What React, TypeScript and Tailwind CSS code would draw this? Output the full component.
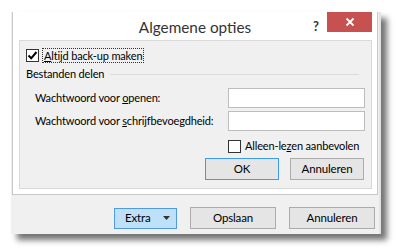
import React from "react";

const font = { fontFamily: 'Lato, "Noto Sans", sans-serif' };

function Check({ checked }: { checked?: boolean }) {
  return (
    <span className="w-[13px] h-[13px] border border-[#333] bg-white flex items-center justify-center shrink-0">
      {checked && (
        <svg width="11" height="11" viewBox="0 0 11 11">
          <path d="M1.5 5.5 L4.2 8.3 L9.5 2" stroke="#000" strokeWidth="2" fill="none" />
        </svg>
      )}
    </span>
  );
}

export default function App() {
  return (
    <div className="relative w-[396px] h-[250px] bg-white overflow-hidden text-[11px] tracking-[-0.15px] text-[#000] whitespace-nowrap" style={font}>
      {/* back window */}
      <div className="absolute left-[11px] top-[12px] w-[370px] h-[222px] bg-[#f0f0f0] border-r-2 border-[#e3e3e3] shadow-[6px_6px_6px_rgba(0,0,0,0.55)] flex flex-col justify-end">
        <div className="flex justify-end items-center gap-[13px] pr-[4px] pb-[5px] text-[11.5px]">
          <div className="w-[63px] h-[21px] bg-[#bee0f8] border border-[#4f9ae0] flex items-center justify-between pl-[10px] pr-[5px]">
            <span>Extra</span>
            <svg width="8" height="5" viewBox="0 0 8 5" className="shrink-0">
              <path d="M0 0 H7 L3.5 4 Z" fill="#333" />
            </svg>
          </div>
          <div className="w-[86px] h-[22px] bg-[#e5e5e5] border border-[#acacac] flex items-center justify-center">Opslaan</div>
          <div className="w-[86px] h-[22px] bg-[#e5e5e5] border border-[#acacac] flex items-center justify-center">Annuleren</div>
        </div>
      </div>

      {/* front dialog */}
      <div className="absolute left-[12px] top-[12px] w-[366px] h-[183px] bg-white border border-[#c8c8c8] border-t-0 flex flex-col">
        <div className="h-[28px] relative flex items-center justify-center shrink-0">
          <span className="text-[15.3px] tracking-normal text-[#333] mt-[2px]">Algemene opties</span>
          <span className="absolute left-[300px] top-[5px] text-[13px] font-bold text-[#333]">?</span>
          <div className="absolute right-[5px] top-0 w-[45px] h-[20px] bg-[#c75050] flex items-center justify-center">
            <svg width="10" height="10" viewBox="0 0 10 10">
              <path d="M1.5 1.5 L8.5 8.5 M8.5 1.5 L1.5 8.5" stroke="#fff" strokeWidth="1.8" />
            </svg>
          </div>
        </div>
        <div className="ml-[6px] mr-[5px] h-[149px] bg-[#f0f0f0] border border-[#d9d9d9] flex flex-col px-[6px] pt-[7px]">
          <div className="flex items-center gap-[3px] h-[15px]">
            <Check checked />
            <span className="border border-dotted border-[#333] px-[1px] leading-[13px]">
              <span className="underline">A</span>ltijd back-up maken
            </span>
          </div>
          <div className="flex items-center gap-[6px] mt-[4px] h-[14px]">
            <span>Bestanden delen</span>
            <div className="flex-1 h-px bg-[#dcdcdc] mr-[6px]" />
          </div>
          <div className="flex items-center mt-[7px] h-[20px]">
            <span className="w-[202px] pl-[9px]">
              Wachtwoord voor <span className="underline">o</span>penen:
            </span>
            <div className="w-[137px] h-[20px] bg-white border border-[#bdbdbd]" />
          </div>
          <div className="flex items-center mt-[3px] h-[20px]">
            <span className="w-[202px] pl-[9px]">
              Wachtwoord voor <span className="underline">s</span>chrijfbevoegdheid:
            </span>
            <div className="w-[137px] h-[20px] bg-white border border-[#bdbdbd]" />
          </div>
          <div className="flex items-center mt-[9px] h-[13px] pl-[202px] gap-[4px]">
            <Check />
            <span>
              Alleen-le<span className="underline">z</span>en aanbevolen
            </span>
          </div>
          <div className="flex justify-end gap-[11px] mt-[5px] mr-[1px] text-[11.5px]">
            <div className="w-[74px] h-[22px] bg-[#e5e5e5] border border-[#3c9af0] flex items-center justify-center">OK</div>
            <div className="w-[74px] h-[22px] bg-[#e5e5e5] border border-[#acacac] flex items-center justify-center">Annuleren</div>
          </div>
        </div>
      </div>
    </div>
  );
}
